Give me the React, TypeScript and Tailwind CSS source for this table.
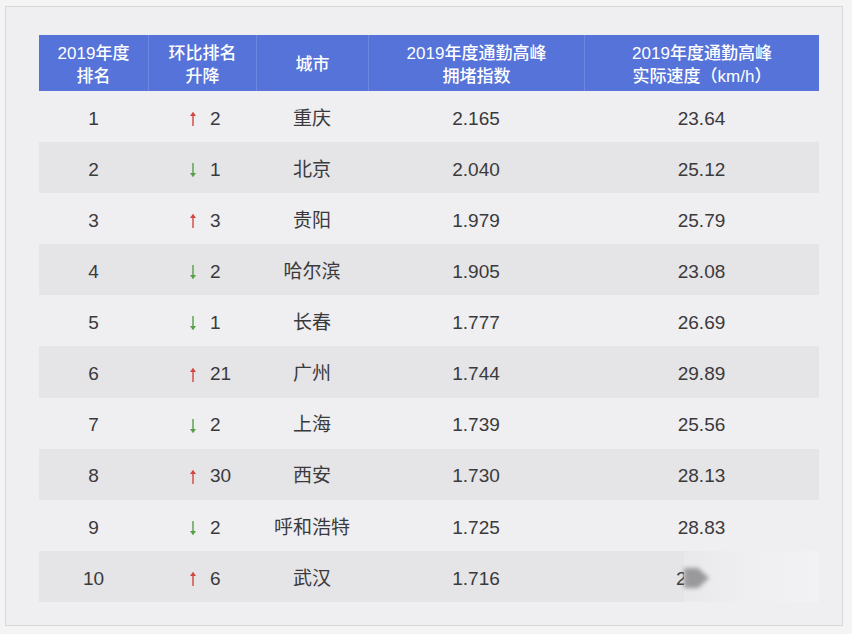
const ROWS = [
  { rank: 1, dir: "up", change: 2, city: "重庆", index: "2.165", speed: "23.64" },
  { rank: 2, dir: "down", change: 1, city: "北京", index: "2.040", speed: "25.12" },
  { rank: 3, dir: "up", change: 3, city: "贵阳", index: "1.979", speed: "25.79" },
  { rank: 4, dir: "down", change: 2, city: "哈尔滨", index: "1.905", speed: "23.08" },
  { rank: 5, dir: "down", change: 1, city: "长春", index: "1.777", speed: "26.69" },
  { rank: 6, dir: "up", change: 21, city: "广州", index: "1.744", speed: "29.89" },
  { rank: 7, dir: "down", change: 2, city: "上海", index: "1.739", speed: "25.56" },
  { rank: 8, dir: "up", change: 30, city: "西安", index: "1.730", speed: "28.13" },
  { rank: 9, dir: "down", change: 2, city: "呼和浩特", index: "1.725", speed: "28.83" },
  { rank: 10, dir: "up", change: 6, city: "武汉", index: "1.716", speed: "2" },
] as const;

const FONT = { fontFamily: '"Liberation Sans", "Noto Sans CJK SC", sans-serif' };

function Arrow({ dir }: { dir: "up" | "down" }) {
  const up = dir === "up";
  return (
    <svg width="8" height="16" viewBox="0 0 8 16" className={up ? "text-[#d2463f]" : "text-[#55a045]"}>
      {up ? (
        <>
          <line x1="4" y1="15" x2="4" y2="4" stroke="currentColor" strokeWidth="1.4" />
          <path d="M1 5 L4 0.8 L7 5 Z" fill="currentColor" />
        </>
      ) : (
        <>
          <line x1="4" y1="1" x2="4" y2="12" stroke="currentColor" strokeWidth="1.4" />
          <path d="M1 11 L4 15.2 L7 11 Z" fill="currentColor" />
        </>
      )}
    </svg>
  );
}

export default function App() {
  return (
    <div className="w-[852px] h-[634px] bg-[#f4f4f5] pt-[6px] pl-[5px]" style={FONT}>
      <div className="w-[838px] h-[620px] border border-[#d7d7d9] bg-[#efeef0] pt-[28px] pl-[33px]">
        <div className="w-[780px]">
          {/* Header */}
          <div className="grid grid-cols-[109px_108px_112px_216px_235px] h-[56px] bg-[#5573d8] text-white text-[17px] leading-[23px] font-medium">
            <div className="flex flex-col items-center justify-center pt-[3px]">
              <span>2019年度</span>
              <span>排名</span>
            </div>
            <div className="flex flex-col items-center justify-center pt-[3px] border-l border-[#6d87de]">
              <span>环比排名</span>
              <span>升降</span>
            </div>
            <div className="flex flex-col items-center justify-center pt-[3px] border-l border-[#6d87de]">
              <span>城市</span>
            </div>
            <div className="flex flex-col items-center justify-center pt-[3px] border-l border-[#6d87de]">
              <span>2019年度通勤高峰</span>
              <span>拥堵指数</span>
            </div>
            <div className="flex flex-col items-center justify-center pt-[3px] border-l border-[#6d87de]">
              <span>2019年度通勤高峰</span>
              <span>实际速度（km/h）</span>
            </div>
          </div>

          {/* Body */}
          {ROWS.map((r, i) => (
            <div
              key={r.rank}
              className={`relative grid grid-cols-[109px_108px_112px_216px_235px] h-[51.1px] items-center pt-[5px] text-[19px] text-[#3a3a3c] ${
                i % 2 === 1 ? "bg-[#e5e4e6]" : ""
              }`}
            >
              <div className="text-center">{r.rank}</div>
              <div className="flex items-center pl-[41px] gap-[13px]">
                <Arrow dir={r.dir} />
                <span>{r.change}</span>
              </div>
              <div className="text-center">{r.city}</div>
              <div className="text-center">{r.index}</div>
              {r.rank === 10 ? (
                <div className="text-left pl-[92px]">{r.speed}</div>
              ) : (
                <div className="text-center">{r.speed}</div>
              )}
              {r.rank === 10 && (
                <>
                  <div className="absolute left-[645px] top-0 h-full w-[135px] bg-gradient-to-r from-[#e9e8ea] via-[#efeef0] to-[#f2f1f3]" />
                  <div className="absolute left-[641px] top-[14px] h-[26px] w-[32px] blur-[2px]">
                    <svg width="32" height="26" viewBox="0 0 32 26">
                      <path d="M4 3 L18 3 L29 13 L18 23 L4 23 Z" fill="#858487" opacity="0.8" />
                    </svg>
                  </div>
                </>
              )}
            </div>
          ))}
        </div>
      </div>
    </div>
  );
}
